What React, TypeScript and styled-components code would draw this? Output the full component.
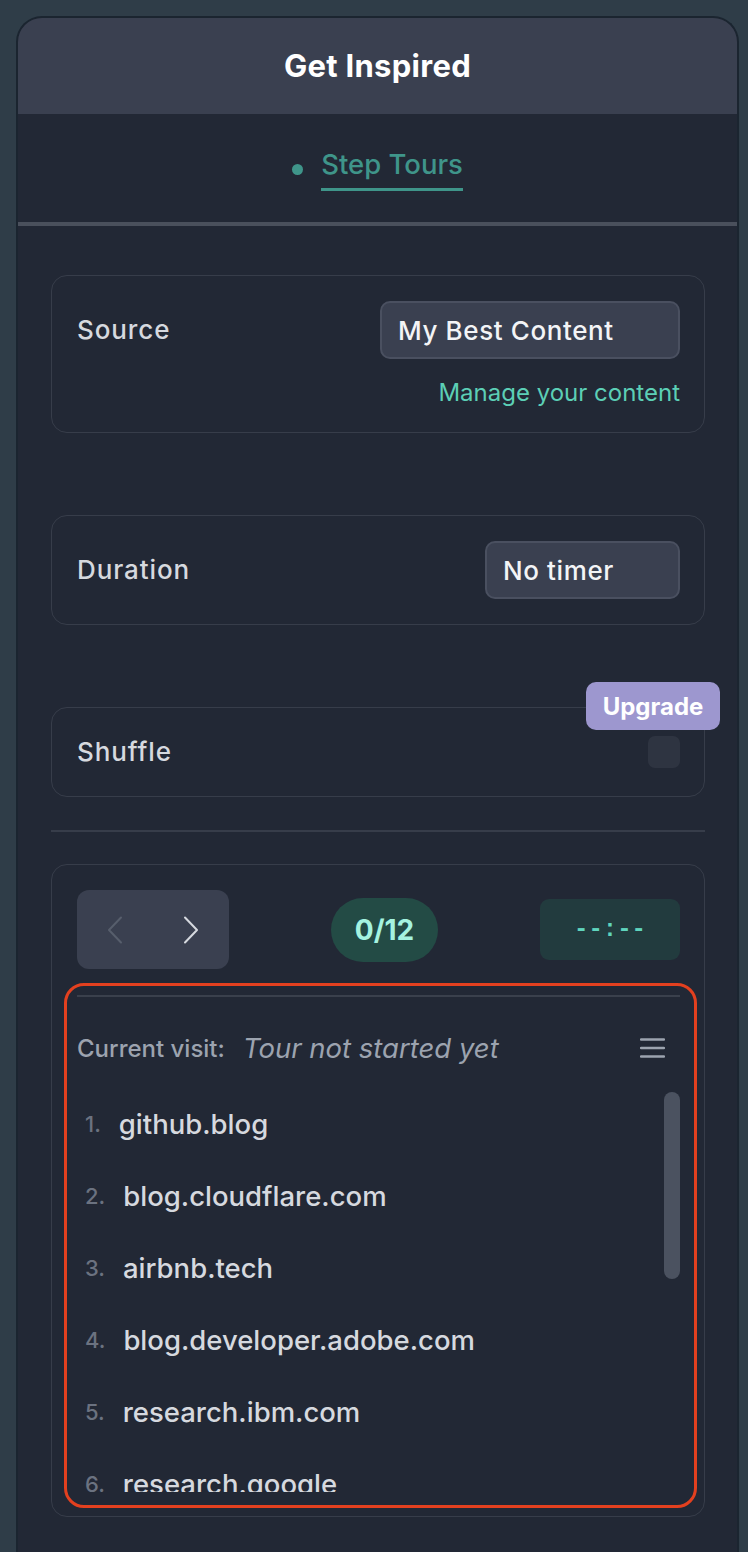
import React from "react";
import styled, { createGlobalStyle } from "styled-components";

const GlobalStyle = createGlobalStyle`
  html, body {
    margin: 0;
    padding: 0;
    background: #2f3d48;
  }
  body {
    font-family: Inter, "Noto Sans", "Liberation Sans", sans-serif;
    -webkit-font-smoothing: antialiased;
  }
  * { box-sizing: border-box; }
`;

const Page = styled.div`
  min-height: 1552px;
  padding: 16px 9px 0 16px;
`;

const Panel = styled.div`
  width: 723px;
  min-height: 1536px;
  background: #222835;
  border: 2px solid #1b2530;
  border-bottom: none;
  border-radius: 26px 26px 0 0;
  overflow: hidden;
  display: flex;
  flex-direction: column;
`;

const Header = styled.header`
  height: 96px;
  background: #3a4050;
  display: flex;
  align-items: center;
  justify-content: center;
`;

const Title = styled.h1`
  margin: 0;
  font-size: 31px;
  font-weight: 700;
  color: #ffffff;
  line-height: 38px;
  letter-spacing: 0.3px;
`;

const TabBar = styled.nav`
  display: flex;
  justify-content: center;
  padding: 35px 0 31px;
  border-bottom: 4px solid #4a505c;
`;

const Tab = styled.div`
  display: flex;
  align-items: flex-start;
  gap: 18px;
`;

const TabDot = styled.span`
  width: 11px;
  height: 11px;
  border-radius: 50%;
  background: #3f958a;
  margin-top: 15px;
`;

const TabLabel = styled.span`
  font-size: 27.5px;
  font-weight: 500;
  line-height: 30px;
  color: #3f958a;
  padding-bottom: 9px;
  border-bottom: 3px solid #3f958a;
`;

const Content = styled.main`
  padding: 49px 32px 0 33px;
  display: flex;
  flex-direction: column;
`;

const Card = styled.section<{ $gapAfter?: number }>`
  position: relative;
  border: 1px solid #373d4a;
  border-radius: 16px;
  margin-bottom: ${(p) => p.$gapAfter ?? 0}px;
`;

const SettingCard = styled(Card)<{ $pt: number; $pb: number }>`
  padding: ${(p) => p.$pt}px 24px ${(p) => p.$pb}px 25px;
`;

const Row = styled.div`
  display: flex;
  align-items: center;
  justify-content: space-between;
`;

const Label = styled.span`
  font-size: 26px;
  font-weight: 500;
  color: #d6d9df;
  line-height: 32px;
  letter-spacing: 0.9px;
`;

const Select = styled.div<{ $w: number }>`
  width: ${(p) => p.$w}px;
  height: 58px;
  background: #3a4050;
  border: 2px solid #4a5060;
  border-radius: 10px;
  display: flex;
  align-items: center;
  padding: 0 16px;
  font-size: 26px;
  font-weight: 500;
  letter-spacing: 0.6px;
  color: #f3f4f6;
`;

const ManageLink = styled.a`
  display: block;
  margin-top: 19px;
  text-align: right;
  font-size: 24px;
  line-height: 30px;
  color: #5ccfb6;
  text-decoration: none;
`;

const Checkbox = styled.span`
  width: 32px;
  height: 32px;
  border-radius: 7px;
  background: #2e3441;
`;

const UpgradeBadge = styled.span`
  position: absolute;
  top: -26px;
  right: -16px;
  width: 134px;
  height: 48px;
  border-radius: 10px;
  background: #9d97cf;
  color: #ffffff;
  font-size: 24px;
  font-weight: 700;
  display: flex;
  align-items: center;
  justify-content: center;
`;

const Divider = styled.hr`
  margin: 0 0 32px;
  border: none;
  height: 2px;
  background: #373d4a;
`;

const TourCard = styled(Card)`
  padding: 25px 24px 8px 25px;
`;

const Controls = styled.div`
  display: flex;
  align-items: center;
  justify-content: space-between;
`;

const NavGroup = styled.div`
  width: 152px;
  height: 79px;
  border-radius: 12px;
  background: #3a4050;
  display: grid;
  grid-template-columns: 1fr 1fr;
`;

const NavButton = styled.button<{ $dim?: boolean }>`
  background: transparent;
  border: none;
  padding: 0;
  display: flex;
  align-items: center;
  justify-content: center;
  color: ${(p) => (p.$dim ? "#575e6c" : "#d6d9df")};
`;

const CounterPill = styled.span`
  width: 107px;
  height: 64px;
  border-radius: 32px;
  background: #234b45;
  color: #a5f3e0;
  font-size: 28px;
  font-weight: 700;
  display: flex;
  align-items: center;
  justify-content: center;
`;

const TimerBox = styled.span`
  width: 140px;
  height: 61px;
  border-radius: 9px;
  background: #223b3e;
  color: #5fd4bd;
  font-family: "Liberation Mono", "DejaVu Sans Mono", monospace;
  font-size: 24px;
  font-weight: 700;
  display: flex;
  align-items: center;
  justify-content: center;
`;

const Highlight = styled.div`
  margin: 14px -17px 0 -13px;
  border: 3px solid #e3401f;
  border-radius: 20px;
  padding: 9px 14px 13px 10px;
`;

const InnerRule = styled.div`
  height: 2px;
  background: #3a404c;
`;

const VisitRow = styled.div`
  margin-top: 35px;
  height: 32px;
  display: flex;
  align-items: center;
`;

const VisitLabel = styled.span`
  font-size: 24px;
  font-weight: 500;
  color: #9ca3af;
`;

const VisitValue = styled.span`
  margin-left: 18px;
  font-size: 27.5px;
  font-style: italic;
  color: #9ca3af;
  flex: 1;
`;

const MenuButton = styled.span`
  display: flex;
  margin-right: 15px;
  color: #9ca3af;
`;

const ListViewport = styled.div`
  position: relative;
  margin-top: 24px;
  height: 404px;
  overflow: hidden;
`;

const List = styled.ol`
  list-style: none;
  margin: 0;
  padding: 0;
`;

const Item = styled.li`
  height: 72px;
  display: flex;
  align-items: center;
  padding-left: 8px;
  gap: 18px;
`;

const ItemNumber = styled.span`
  font-size: 22px;
  color: #6b7280;
  font-weight: 500;
`;

const ItemName = styled.span`
  font-size: 27.5px;
  font-weight: 500;
  color: #d6d9df;
`;

const ScrollThumb = styled.span`
  position: absolute;
  top: 4px;
  right: 0;
  width: 16px;
  height: 187px;
  border-radius: 8px;
  background: #4b5260;
`;

const Chevron = ({ dir }: { dir: "left" | "right" }) => (
  <svg width="16" height="28" viewBox="0 0 16 28" fill="none">
    <polyline
      points={dir === "left" ? "14,1.5 2,14 14,26.5" : "2,1.5 14,14 2,26.5"}
      stroke="currentColor"
      strokeWidth="2"
      strokeLinecap="round"
      strokeLinejoin="round"
    />
  </svg>
);

const MenuIcon = () => (
  <svg width="25" height="20" viewBox="0 0 25 20" fill="none">
    <path d="M1 1.5h23M1 10h23M1 18.5h23" stroke="currentColor" strokeWidth="2.4" strokeLinecap="round" />
  </svg>
);

const sites = [
  "github.blog",
  "blog.cloudflare.com",
  "airbnb.tech",
  "blog.developer.adobe.com",
  "research.ibm.com",
  "research.google",
  "engineering.fb.com",
  "netflixtechblog.com",
  "slack.engineering",
  "dropbox.tech",
  "eng.uber.com",
  "stripe.com/blog",
];

export default function App() {
  return (
    <>
      <GlobalStyle />
      <Page>
        <Panel>
          <Header>
            <Title>Get Inspired</Title>
          </Header>
          <TabBar>
            <Tab>
              <TabDot />
              <TabLabel>Step Tours</TabLabel>
            </Tab>
          </TabBar>
          <Content>
            <SettingCard $pt={25} $pb={24} $gapAfter={82}>
              <Row>
                <Label>Source</Label>
                <Select $w={300}>My Best Content</Select>
              </Row>
              <ManageLink href="#">Manage your content</ManageLink>
            </SettingCard>

            <SettingCard $pt={25} $pb={25} $gapAfter={82}>
              <Row>
                <Label>Duration</Label>
                <Select $w={195}>No timer</Select>
              </Row>
            </SettingCard>

            <SettingCard $pt={28} $pb={28} $gapAfter={33}>
              <UpgradeBadge>Upgrade</UpgradeBadge>
              <Row>
                <Label>Shuffle</Label>
                <Checkbox />
              </Row>
            </SettingCard>

            <Divider />

            <TourCard>
              <Controls>
                <NavGroup>
                  <NavButton $dim aria-label="Previous">
                    <Chevron dir="left" />
                  </NavButton>
                  <NavButton aria-label="Next">
                    <Chevron dir="right" />
                  </NavButton>
                </NavGroup>
                <CounterPill>0/12</CounterPill>
                <TimerBox>--:--</TimerBox>
              </Controls>
              <Highlight>
                <InnerRule />
                <VisitRow>
                  <VisitLabel>Current visit:</VisitLabel>
                  <VisitValue>Tour not started yet</VisitValue>
                  <MenuButton>
                    <MenuIcon />
                  </MenuButton>
                </VisitRow>
                <ListViewport>
                  <List>
                    {sites.map((s, i) => (
                      <Item key={s}>
                        <ItemNumber>{i + 1}.</ItemNumber>
                        <ItemName>{s}</ItemName>
                      </Item>
                    ))}
                  </List>
                  <ScrollThumb />
                </ListViewport>
              </Highlight>
            </TourCard>
          </Content>
        </Panel>
      </Page>
    </>
  );
}
